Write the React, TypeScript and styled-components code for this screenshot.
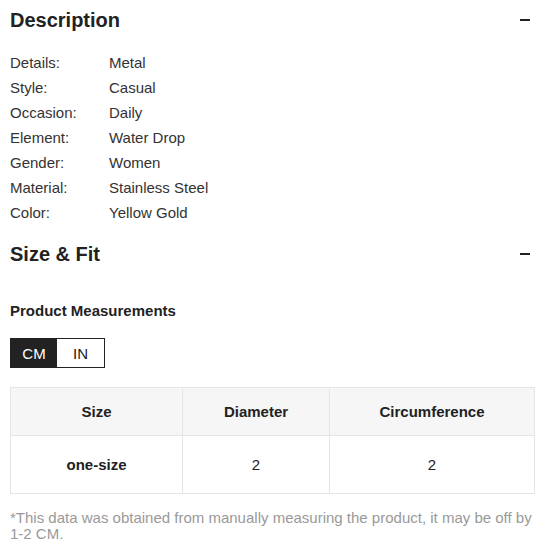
import React, { useState } from "react";
import styled, { createGlobalStyle } from "styled-components";

const GlobalStyle = createGlobalStyle`
  html, body {
    margin: 0;
    padding: 0;
    background: #fff;
  }
  body {
    font-family: "Liberation Sans", Arial, sans-serif;
    color: #222;
  }
`;

const specs: [string, string][] = [
  ["Details:", "Metal"],
  ["Style:", "Casual"],
  ["Occasion:", "Daily"],
  ["Element:", "Water Drop"],
  ["Gender:", "Women"],
  ["Material:", "Stainless Steel"],
  ["Color:", "Yellow Gold"],
];

const App: React.FC = () => {
  const [unit, setUnit] = useState<"CM" | "IN">("CM");

  return (
    <Page>
      <GlobalStyle />
      <SectionHeader>
        <Title>Description</Title>
        <Minus />
      </SectionHeader>
      <SpecList>
        {specs.map(([label, value]) => (
          <SpecRow key={label}>
            <SpecLabel>{label}</SpecLabel>
            <SpecValue>{value}</SpecValue>
          </SpecRow>
        ))}
      </SpecList>

      <SectionHeader>
        <Title>Size &amp; Fit</Title>
        <Minus />
      </SectionHeader>
      <SubTitle>Product Measurements</SubTitle>
      <Toggle>
        <ToggleButton active={unit === "CM"} onClick={() => setUnit("CM")}>
          CM
        </ToggleButton>
        <ToggleButton active={unit === "IN"} onClick={() => setUnit("IN")}>
          IN
        </ToggleButton>
      </Toggle>
      <Table>
        <colgroup>
          <col style={{ width: 172 }} />
          <col style={{ width: 147 }} />
          <col />
        </colgroup>
        <thead>
          <tr>
            <Th>Size</Th>
            <Th>Diameter</Th>
            <Th>Circumference</Th>
          </tr>
        </thead>
        <tbody>
          <tr>
            <Td bold>one-size</Td>
            <Td>{unit === "CM" ? "2" : "0.8"}</Td>
            <Td>{unit === "CM" ? "2" : "0.8"}</Td>
          </tr>
        </tbody>
      </Table>
      <Note>
        *This data was obtained from manually measuring the product, it may be off by 1-2 CM.
      </Note>
    </Page>
  );
};

const Page = styled.div`
  width: 525px;
  padding: 0 1px 0 10px;
`;

const SectionHeader = styled.div`
  display: flex;
  align-items: center;
  justify-content: space-between;
  height: 40px;
`;

const Title = styled.h2`
  margin: 0;
  font-size: 20px;
  font-weight: 700;
  color: #222;
`;

const Minus = styled.span`
  display: block;
  width: 10px;
  height: 2px;
  background: #222;
  margin-right: 5px;
`;

const SpecList = styled.div`
  display: flex;
  flex-direction: column;
  margin: 10px 0 9px;
`;

const SpecRow = styled.div`
  display: grid;
  grid-template-columns: 99px 1fr;
  line-height: 25px;
  font-size: 15px;
  color: #333;
`;

const SpecLabel = styled.span``;

const SpecValue = styled.span``;

const SubTitle = styled.div`
  margin-top: 27px;
  font-size: 15px;
  line-height: 20px;
  font-weight: 700;
  color: #222;
`;

const Toggle = styled.div`
  display: inline-flex;
  margin-top: 17px;
  border: 1px solid #222;
  height: 28px;
`;

const ToggleButton = styled.button<{ active?: boolean }>`
  border: none;
  margin: 0;
  padding: 0;
  width: ${(p) => (p.active ? "46px" : "47px")};
  height: 28px;
  font-family: "Liberation Sans", Arial, sans-serif;
  font-size: 15px;
  background: ${(p) => (p.active ? "#222" : "#fff")};
  color: ${(p) => (p.active ? "#fff" : "#222")};
  cursor: pointer;
`;

const Table = styled.table`
  display: table;
  margin-top: 19px;
  width: 525px;
  border-collapse: collapse;
  table-layout: fixed;
  font-size: 15px;
`;

const Th = styled.th`
  height: 47px;
  background: #f6f6f6;
  border: 1px solid #e5e5e5;
  font-weight: 700;
  color: #222;
  text-align: center;
  padding: 0;
`;

const Td = styled.td<{ bold?: boolean }>`
  height: 57px;
  border: 1px solid #e5e5e5;
  text-align: center;
  padding: 0;
  color: #222;
  font-weight: ${(p) => (p.bold ? 700 : 400)};
`;

const Note = styled.p`
  margin: 16px 0 0;
  font-size: 15px;
  line-height: 16px;
  color: #999;
`;

export default App;
